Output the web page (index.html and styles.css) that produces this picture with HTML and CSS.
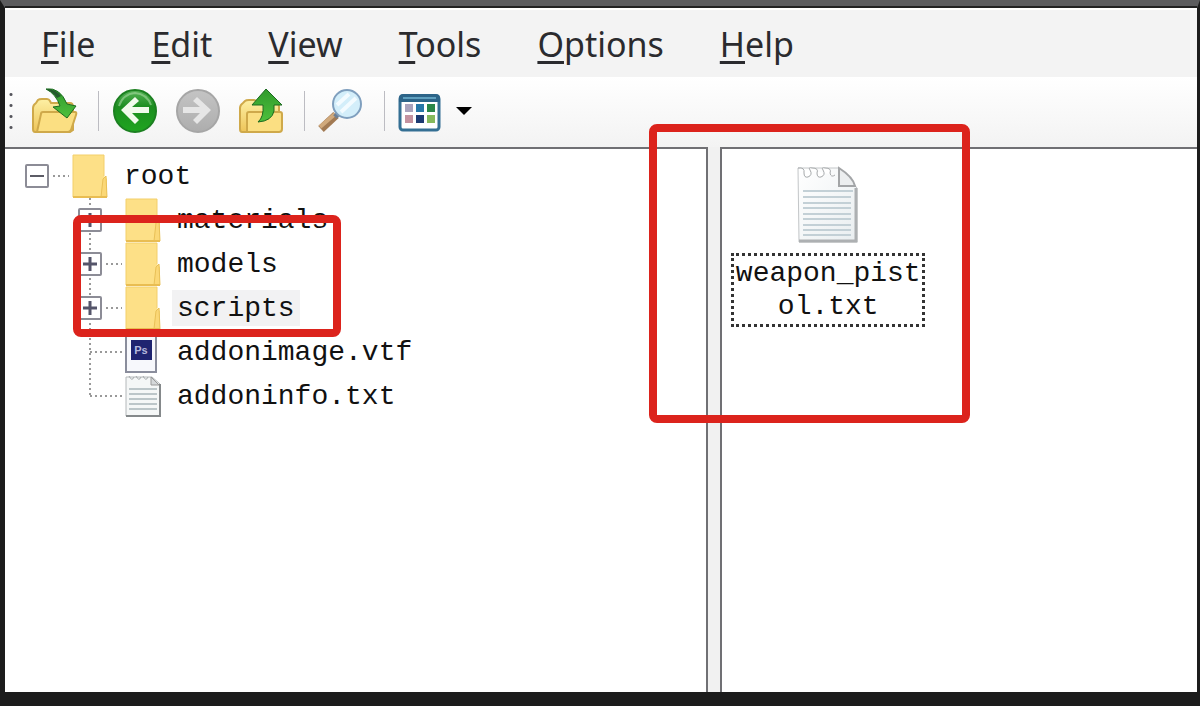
FILE: index.html
```
<!DOCTYPE html>
<html lang="en">
<head>
    <meta charset="UTF-8">
    <title>root</title>
    <link rel="stylesheet" href="styles.css">
</head>
<body>
    <!-- shared gradients and symbols -->
    <svg class="defs" aria-hidden="true">
        <defs>
            <linearGradient id="gold" x1="0" y1="0" x2="0" y2="1">
                <stop offset="0" stop-color="#fdf0a4"/>
                <stop offset="1" stop-color="#eec458"/>
            </linearGradient>
            <linearGradient id="leaf" x1="0" y1="0" x2="0" y2="1">
                <stop offset="0" stop-color="#2f9a2c"/>
                <stop offset="1" stop-color="#4fc03c"/>
            </linearGradient>
            <linearGradient id="ball" x1="0" y1="0" x2="0" y2="1">
                <stop offset="0" stop-color="#58b458"/>
                <stop offset="0.4" stop-color="#1c8e20"/>
                <stop offset="1" stop-color="#1fa51f"/>
            </linearGradient>
            <linearGradient id="ball-off" x1="0" y1="0" x2="0" y2="1">
                <stop offset="0" stop-color="#c4c4c4"/>
                <stop offset="1" stop-color="#adadad"/>
            </linearGradient>
            <linearGradient id="paper" x1="0" y1="0" x2="1" y2="1">
                <stop offset="0" stop-color="#ffffff"/>
                <stop offset="1" stop-color="#e9eef0"/>
            </linearGradient>
        </defs>
        <symbol id="folder" viewBox="0 0 36 44">
            <path d="M1 1H32V22L35 25V43H1Z" fill="#fde087"/>
            <path d="M1 43V1H32V22" fill="none" stroke="#f3cf6b"/>
            <path d="M29 43L31 25L34 22L35 43Z" fill="#fbd877" stroke="#e9c057"/>
            <path d="M1 43H35" stroke="#e9bd52" stroke-width="2"/>
        </symbol>
    </svg>

    <div class="window">
        <nav class="menu">
            <button type="button"><u>F</u>ile</button>
            <button type="button"><u>E</u>dit</button>
            <button type="button"><u>V</u>iew</button>
            <button type="button"><u>T</u>ools</button>
            <button type="button"><u>O</u>ptions</button>
            <button type="button"><u>H</u>elp</button>
        </nav>

        <div class="toolbar">
            <span class="grip"></span>
            <button type="button" aria-label="Open">
                <svg width="46" height="46" viewBox="0 0 46 46">
                    <path d="M3 44Q1 44 1 41V20Q1 17 4 15L6 12Q7 11 10 11H15Q17 11 18 13L19 15H38Q41 15 41 19V42L38 44Z" fill="url(#gold)" stroke="#cfa94a" stroke-width="2"/>
                    <path d="M11 24H43Q45 24 44 27L39 42Q38 44 36 44H5L9 26Q9 24 11 24Z" fill="#fbdf82" stroke="#cfa94a" stroke-width="2"/>
                    <path d="M14 1Q28 -1 35 16L44 18L35 30L21 19L28 18Q24 6 14 1Z" fill="url(#leaf)" stroke="#1c6a20" stroke-width="1"/>
                    <path d="M14 1Q24 1 29 8L25 10Q21 4 14 1Z" fill="#235a2c"/>
                </svg>
            </button>
            <span class="sep"></span>
            <button type="button" aria-label="Back">
                <svg width="46" height="46" viewBox="0 0 46 46">
                    <circle cx="23" cy="23" r="21" fill="url(#ball)" stroke="#1c8021" stroke-width="2"/>
                    <path d="M7 18Q11 6 23 5Q35 6 39 17" fill="none" stroke="#a5d8a0" stroke-width="2" opacity="0.6"/>
                    <path d="M9 22L23 9L27 13L20 19H37V25H20L27 32L23 36Z" fill="#f1fbec"/>
                </svg>
            </button>
            <button type="button" aria-label="Forward">
                <svg width="46" height="46" viewBox="0 0 46 46">
                    <circle cx="23" cy="23" r="21" fill="url(#ball-off)" stroke="#a6a6a6" stroke-width="2"/>
                    <path d="M36 22L22 9L18 13L25 19H8V25H25L18 32L22 36Z" fill="#e6e6e6"/>
                </svg>
            </button>
            <button type="button" aria-label="Up">
                <svg width="46" height="46" viewBox="0 0 46 46">
                    <path d="M4 44Q2 44 2 41V20Q2 17 5 15L7 13Q8 12 11 12H16Q18 12 20 15H38Q41 15 41 19V42L38 44Z" fill="url(#gold)" stroke="#cfa94a" stroke-width="2"/>
                    <path d="M9 44V26Q9 24 11 24H42Q44 24 44 26V41Q44 44 41 44Z" fill="#fbdf82" stroke="#cfa94a" stroke-width="2"/>
                    <path d="M28 1L44 17H36V23Q34 33 20 34Q26 29 25 17H14Z" fill="url(#leaf)" stroke="#1c6a20" stroke-width="1"/>
                </svg>
            </button>
            <span class="sep"></span>
            <button type="button" aria-label="Search">
                <svg width="46" height="46" viewBox="0 0 46 46">
                    <path d="M18 27L3 41" stroke="#a27a53" stroke-width="8"/>
                    <path d="M17 26L2 39" stroke="#d0a97c" stroke-width="4"/>
                    <path d="M20 26L17 29" stroke="#6f7f92" stroke-width="5"/>
                    <circle cx="29" cy="16" r="14" fill="#d3eefa" stroke="#7f9fbe" stroke-width="2"/>
                    <path d="M19 17L31 6M23 24L38 10" stroke="#f3fbff" stroke-width="4"/>
                </svg>
            </button>
            <span class="sep"></span>
            <button type="button" class="views" aria-label="Views">
                <svg width="43" height="46" viewBox="0 0 43 46">
                    <rect x="2" y="8" width="39" height="34" rx="3" fill="#fff" stroke="#346f93" stroke-width="3"/>
                    <path d="M1 14V10Q1 6 5 6H38Q42 6 42 10V14Z" fill="#2c6488"/>
                    <path d="M5 10H38" stroke="#5fa0bf" stroke-width="2"/>
                    <rect x="7" y="16" width="8" height="8" fill="#a9a3bd"/>
                    <rect x="18" y="16" width="8" height="8" fill="#2878a8"/>
                    <rect x="29" y="16" width="8" height="8" fill="#2c8748"/>
                    <rect x="7" y="27" width="8" height="8" fill="#c492a0"/>
                    <rect x="18" y="27" width="8" height="8" fill="#1d3b72"/>
                    <rect x="29" y="27" width="8" height="8" fill="#85b95c"/>
                </svg>
                <svg width="16" height="8" viewBox="0 0 16 8"><path d="M0 0H16L8 8Z" fill="#000"/></svg>
            </button>
        </div>

        <div class="panes">
            <div class="tree-pane">
                <div class="row">
                    <button type="button" class="toggle" aria-label="Collapse root">
                        <svg width="24" height="24" viewBox="0 0 24 24"><path d="M5 12H19" stroke="#5c5c66" stroke-width="2"/></svg>
                    </button>
                    <span class="link"></span>
                    <svg class="pic" width="36" height="44"><use href="#folder"/></svg>
                    <span class="name">root</span>
                </div>
                <ul class="tree">
                    <li class="row">
                        <button type="button" class="toggle" aria-label="Expand materials">
                            <svg width="24" height="24" viewBox="0 0 24 24"><path d="M5 12H19M12 5V19" stroke="#55556a" stroke-width="3"/></svg>
                        </button>
                        <span class="link"></span>
                        <svg class="pic" width="36" height="44"><use href="#folder"/></svg>
                        <span class="name">materials</span>
                    </li>
                    <li class="row">
                        <button type="button" class="toggle" aria-label="Expand models">
                            <svg width="24" height="24" viewBox="0 0 24 24"><path d="M5 12H19M12 5V19" stroke="#55556a" stroke-width="3"/></svg>
                        </button>
                        <span class="link"></span>
                        <svg class="pic" width="36" height="44"><use href="#folder"/></svg>
                        <span class="name">models</span>
                    </li>
                    <li class="row">
                        <button type="button" class="toggle" aria-label="Expand scripts">
                            <svg width="24" height="24" viewBox="0 0 24 24"><path d="M5 12H19M12 5V19" stroke="#55556a" stroke-width="3"/></svg>
                        </button>
                        <span class="link"></span>
                        <svg class="pic" width="36" height="44"><use href="#folder"/></svg>
                        <span class="name selected">scripts</span>
                    </li>
                    <li class="row leaf">
                        <span class="link"></span>
                        <svg class="pic" width="36" height="44" viewBox="0 0 36 44">
                            <path d="M1 1H31V42H1Z" fill="#f7f8fc" stroke="#8a8d9c" stroke-width="2"/>
                            <rect x="6" y="10" width="21" height="20" fill="#1f2470"/>
                            <text class="badge" x="16" y="24" text-anchor="middle">Ps</text>
                        </svg>
                        <span class="name">addonimage.vtf</span>
                    </li>
                    <li class="row leaf">
                        <span class="link"></span>
                        <svg class="pic" width="36" height="44" viewBox="0 0 36 44">
                            <path d="M1 3H27L35 10V42H1Z" fill="#f5f7f7" stroke="#b4b8ba" stroke-width="1"/>
                            <path d="M1 42H35V10" fill="none" stroke="#85898b" stroke-width="2"/>
                            <path d="M4 2Q7 8 9 3M11 2Q14 8 16 3M18 2Q21 8 23 3" fill="none" stroke="#a5a9ab"/>
                            <path d="M26 3V11H34Z" fill="#d5d8da" stroke="#999"/>
                            <path d="M4 15H32M4 20H32M4 25H32M4 30H32M4 35H32" stroke="#bcc6c9" stroke-width="2"/>
                        </svg>
                        <span class="name">addoninfo.txt</span>
                    </li>
                </ul>
                <div class="mark mark-folders"></div>
            </div>

            <div class="splitter"></div>

            <div class="file-pane">
                <a class="file" href="#">
                    <svg width="66" height="80" viewBox="0 0 66 80">
                        <path d="M3 3H44L62 23V77H4Z" fill="url(#paper)" stroke="#c3c6c8"/>
                        <path d="M4 76H61V23" fill="none" stroke="#adb0b2" stroke-width="3"/>
                        <path d="M3 3Q10 2 9 8Q9 13 13 12Q18 10 15 5Q13 2 17 3Q24 3 22 8Q22 13 26 12Q31 10 28 5Q26 2 30 3Q37 3 35 8Q36 13 40 10" fill="#fff" stroke="#a6a9ab" stroke-width="1"/>
                        <path d="M44 3V21H60Q58 12 44 3Z" fill="#eceeef" stroke="#a3a5a7" stroke-width="2"/>
                        <path d="M8 26H58M8 32H56M8 38H56M8 43H56M8 49H56M8 54H56M8 60H56M8 65H56M8 70H56" stroke="#c3d0d6" stroke-width="2"/>
                    </svg>
                    <span class="label">weapon_pistol.txt</span>
                </a>
                <div class="mark mark-file"></div>
            </div>
        </div>
    </div>
</body>
</html>
```
FILE: styles.css
```
* {
    margin: 0;
    padding: 0;
    box-sizing: border-box;
}

body {
    height: 100vh;
    background: #1f1f1f;
    overflow: hidden;
}

button {
    background: none;
    border: none;
    color: inherit;
    font: inherit;
}

svg {
    display: block;
    flex: none;
}

.defs {
    position: absolute;
    width: 0;
    height: 0;
}

.window {
    height: 100%;
    display: flex;
    flex-direction: column;
    border: solid #1c1c1c;
    border-width: 8px 3px 14px 5px;
    border-top-color: #5c5c5e;
    background: #f4f4f4;
}

.menu {
    display: flex;
    gap: 2px;
    height: 69px;
    flex: none;
    padding: 0 9px;
    border-top: 2px solid #fff;
    background: #f3f3f3;
    box-shadow: 0 -2px 0 #222;
    color: #2b2b2e;
    font-family: "Noto Sans", "Open Sans", sans-serif;
    font-size: 34px;
}

.menu button {
    padding: 0 27px;
}

.menu u {
    text-decoration-thickness: 3px;
    text-underline-offset: 4px;
    text-decoration-skip-ink: none;
}

.toolbar {
    display: flex;
    align-items: center;
    flex: none;
    gap: 17px;
    height: 70px;
    padding: 0 4px 2px;
    background: linear-gradient(#fff, #f3f3f3);
}

.grip {
    width: 4px;
    height: 44px;
    margin-right: 2px;
    background: radial-gradient(circle, #55555c 1px, transparent 2px) 0 0 / 4px 11px;
}

.sep {
    width: 1px;
    height: 40px;
    margin: 0 -4px 0 3px;
    background: #bcbcc2;
}

.views {
    display: flex;
    align-items: center;
    gap: 15px;
}

.panes {
    flex: 1;
    display: grid;
    grid-template-columns: 59% 12px 1fr;
    min-height: 0;
}

.tree-pane, .file-pane {
    position: relative;
    background: #fff;
    border-top: 2px solid #707074;
}

.tree-pane {
    padding: 5px 20px;
    border-right: 2px solid #707074;
}

.file-pane {
    padding: 16px 9px;
    border-left: 2px solid #707074;
}

.splitter {
    background: #f1f1f1;
}

.row {
    display: flex;
    align-items: center;
    height: 44px;
    color: #111;
    font-family: "Liberation Mono", monospace;
    font-size: 28px;
}

/* dotted trunk runs behind the toggles */
.tree {
    list-style: none;
    margin-left: 53px;
    background: repeating-linear-gradient(#999 0 2px, transparent 2px 5px) 11px 0 / 2px 199px no-repeat;
}

.toggle {
    flex: none;
    width: 24px;
    height: 24px;
    background: #fff;
    border-radius: 2px;
    box-shadow: inset 0 0 0 2px #8c8c96;
}

.link {
    flex: none;
    width: 16px;
    height: 2px;
    margin: 0 3px 0 4px;
    background: repeating-linear-gradient(90deg, #999 0 2px, transparent 2px 5px);
}

.leaf .link {
    width: 32px;
    margin-left: 12px;
}

.badge {
    fill: #b5b8dd;
    font-family: "Liberation Sans", sans-serif;
    font-size: 11px;
    font-weight: bold;
}

.name {
    margin-left: 11px;
    padding: 2px 5px 0;
    line-height: 34px;
}

.selected {
    background: #f2f2f3;
}

.file {
    display: flex;
    flex-direction: column;
    align-items: center;
    gap: 8px;
    width: 194px;
    color: #111;
    text-decoration: none;
}

.label {
    width: 100%;
    padding: 1px 0;
    border: 3px dotted #333;
    font-family: "Liberation Mono", monospace;
    font-size: 28px;
    line-height: 33px;
    text-align: center;
    word-break: break-all;
}

/* red annotation frames */
.mark {
    position: absolute;
    border: 8px solid #dc231c;
    border-radius: 8px;
    pointer-events: none;
}

.mark-folders {
    left: 68px;
    top: 66px;
    width: 268px;
    height: 122px;
}

.mark-file {
    left: -73px;
    top: -25px;
    width: 321px;
    height: 299px;
}
```
